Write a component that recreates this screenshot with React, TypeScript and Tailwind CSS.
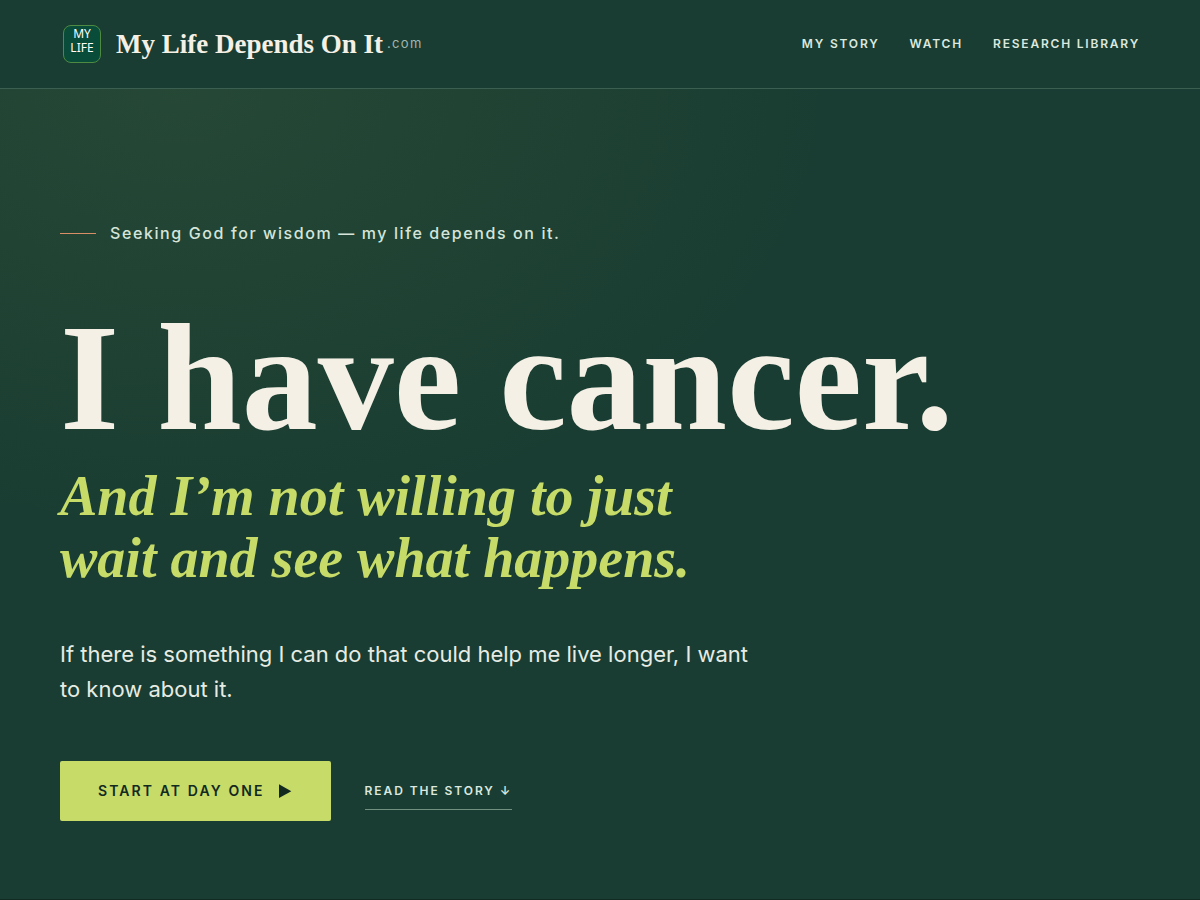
import React from 'react';

const navLinks = [
  { label: 'My Story', href: '#story' },
  { label: 'Watch', href: '#watch' },
  { label: 'Research Library', href: '#research' },
];

const Header: React.FC = () => {
  return (
    <header className="border-b border-[#3b5f50] bg-[#193d32]">
      <div className="mx-auto flex h-[88px] max-w-[1200px] items-center justify-between px-[60px]">
        <a href="#top" className="flex items-center">
          <span className="ml-[3px] h-[38px] w-[38px] rounded-lg border border-[#4f8a43] bg-[#084c39] pt-px text-center font-['Noto_Sans',sans-serif] text-xs leading-[14px] text-white">
            MY
            <br />
            LIFE
          </span>
          <span className="ml-[15px] font-['Liberation_Serif',serif] text-[27px] leading-9 font-bold text-[#f5f0e6]">
            My Life Depends On It
          </span>
          <span className="ml-1 text-[13px] tracking-widest text-[#a3b5ac]">.com</span>
        </a>

        <nav className="flex items-center gap-[30px]">
          {navLinks.map((link) => (
            <a
              key={link.href}
              href={link.href}
              className="text-xs font-semibold tracking-[0.15em] text-[#dbe8df] uppercase hover:text-white"
            >
              {link.label}
            </a>
          ))}
        </nav>
      </div>
    </header>
  );
};

const Hero: React.FC = () => {
  return (
    <section className="bg-[radial-gradient(ellipse_55%_55%_at_15%_0%,rgba(190,195,90,0.08),transparent)]">
      <div className="mx-auto max-w-[1200px] px-[60px] pt-[132px] pb-[78px]">
        {/* Eyebrow */}
        <p className="flex items-center gap-3.5 text-base leading-6 font-medium tracking-widest text-[#d5e5da]">
          <span className="h-px w-9 shrink-0 bg-[#d98e66]" />
          Seeking God for wisdom — my life depends on it.
        </p>

        <h1 className="mt-[58px] font-['Liberation_Serif',serif] text-[152px] leading-[150px] font-bold whitespace-nowrap text-[#f5f0e6]">
          I have cancer.
        </h1>
        <p className="mt-3 font-['Liberation_Serif',serif] text-[56px] leading-[62px] font-bold text-[#c6db68] italic">
          And I’m not willing to just
          <br />
          wait and see what happens.
        </p>

        <p className="mt-12 max-w-[700px] text-[22px] leading-[35px] text-[#e6ece4]">
          If there is something I can do that could help me live longer, I want to know about it.
        </p>

        {/* Actions */}
        <div className="mt-[54px] flex items-center gap-[34px]">
          <a
            href="#day-one"
            className="flex h-[60px] items-center gap-3.5 rounded-[2px] bg-[#c6db68] px-[38px] text-sm font-semibold tracking-[0.15em] text-[#12291f] uppercase"
          >
            Start at day one
            <svg viewBox="0 0 14 14" className="h-3.5 w-3.5" fill="currentColor" aria-hidden="true">
              <path d="M0 0.3 L12.3 7.2 L0 14 Z" />
            </svg>
          </a>
          <a
            href="#story"
            className="border-b border-[#71907f] py-2.5 text-xs font-semibold tracking-[0.16em] text-[#dbe8df] uppercase"
          >
            Read the story ↓
          </a>
        </div>
      </div>
    </section>
  );
};

const App: React.FC = () => {
  return (
    <div id="top" className="min-h-screen bg-[#193d32] font-[Inter,sans-serif]">
      <Header />
      <main>
        <Hero />
        <div className="h-px bg-[#122b22]" />
      </main>
    </div>
  );
};

export default App;
